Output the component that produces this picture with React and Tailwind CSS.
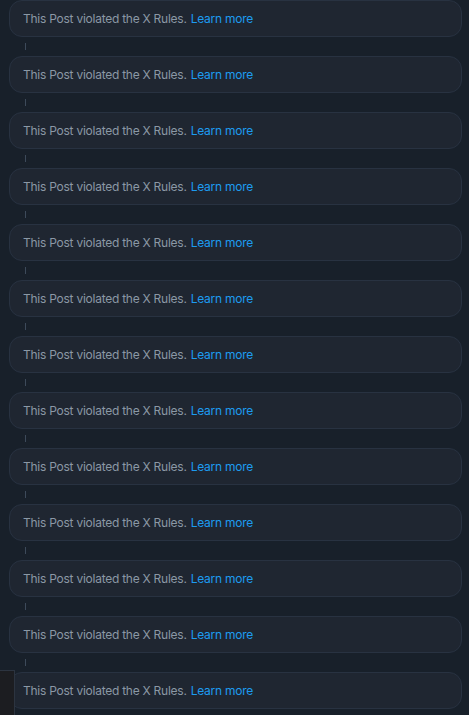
import React from "react";

export default function App() {
  const items = Array.from({ length: 13 });
  return (
    <div
      className="relative min-h-[715px] w-[469px] overflow-hidden bg-[#18202a] pl-[9px] pr-[7px]"
      style={{ fontFamily: "Inter, 'Noto Sans', sans-serif" }}
    >
      <div className="flex flex-col">
        {items.map((_, i) => (
          <div key={i} className="flex flex-col">
            <div className="flex h-[37px] items-center rounded-[13px] border border-[#283241] bg-[#1f2631] pl-[13px] pt-[1px] text-[12px] tracking-[-0.25px] text-[#8b98a5]">
              <span>This Post violated the X Rules.</span>
              <span className="ml-[4px] text-[#1d9bf0]">Learn more</span>
            </div>
            {i < items.length - 1 && (
              <div className="flex h-[19px] items-center pl-[16px]">
                <div className="h-[7px] w-px bg-[#3d4a5a]" />
              </div>
            )}
          </div>
        ))}
      </div>
      <div className="absolute left-0 top-[670px] h-[45px] w-[15px] border-r border-t border-[#2c3440] bg-[#1c1d21]" />
    </div>
  );
}
